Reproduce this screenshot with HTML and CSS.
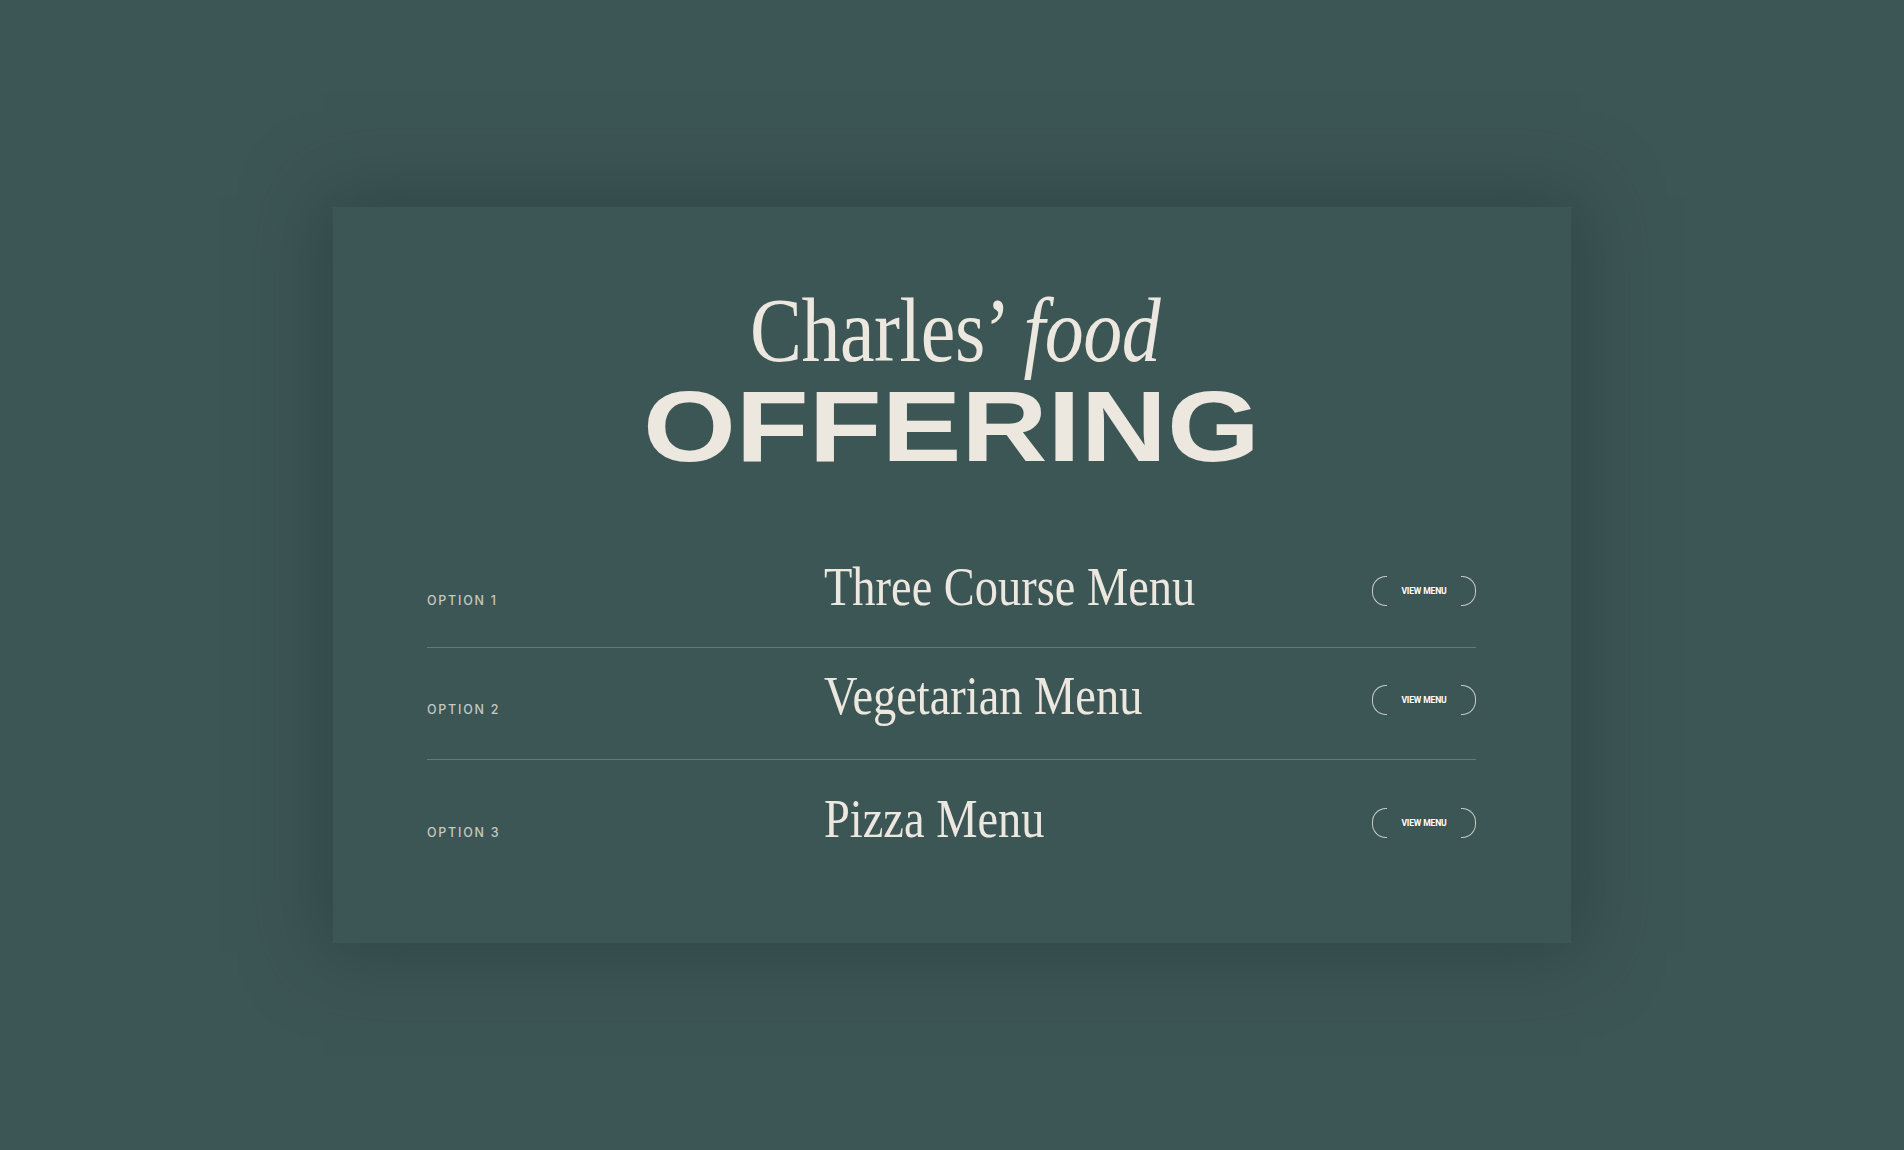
FILE: index.html
```html
<!DOCTYPE html>
<html lang="en">
<head>
<meta charset="utf-8">
<title>Charles' food offering</title>
<link rel="stylesheet" href="styles.css">
</head>
<body>
  <main class="card">
    <header class="heading">
      <div class="heading-script"><span class="heading-script-inner">Charles’ <em>food</em></span></div>
      <div class="heading-bold"><span class="heading-bold-inner">OFFERING</span></div>
    </header>
    <ul class="menu-list">
      <li class="menu-row">
        <span class="menu-label">OPTION 1</span>
        <span class="menu-name"><span class="menu-name-inner">Three Course Menu</span></span>
        <a class="menu-button" href="#">VIEW MENU</a>
      </li>
      <li class="menu-row">
        <span class="menu-label">OPTION 2</span>
        <span class="menu-name"><span class="menu-name-inner">Vegetarian Menu</span></span>
        <a class="menu-button" href="#">VIEW MENU</a>
      </li>
      <li class="menu-row">
        <span class="menu-label">OPTION 3</span>
        <span class="menu-name"><span class="menu-name-inner">Pizza Menu</span></span>
        <a class="menu-button" href="#">VIEW MENU</a>
      </li>
    </ul>
  </main>
</body>
</html>
```
FILE: styles.css
```css
* { box-sizing: border-box; }

html, body {
  margin: 0;
  padding: 0;
}

body {
  height: 100vh;
  background: #3c5655;
  display: flex;
  align-items: center;
  justify-content: center;
  font-family: "Liberation Serif", serif;
  color: #ece7df;
}

.card {
  width: 1238px;
  background: #3c5655;
  padding: 79px 95px 97px 94px;
  box-shadow: 0 0 70px 10px rgba(36, 56, 55, 0.55);
}

.heading {
  text-align: center;
}

.heading-script {
  font-family: "Liberation Serif", serif;
  font-size: 90px;
  line-height: 90px;
  height: 90px;
  padding-left: 8px;
  white-space: nowrap;
}

.heading-script-inner {
  display: inline-block;
  transform: scaleX(0.865);
  transform-origin: center;
  letter-spacing: -0.5px;
}

.heading-script em {
  font-style: italic;
}

.heading-bold {
  font-family: "Liberation Sans", sans-serif;
  font-weight: 700;
  font-size: 100px;
  line-height: 100px;
  height: 100px;
  white-space: nowrap;
}

.heading-bold-inner {
  display: inline-block;
  transform: scaleX(1.194);
  transform-origin: center;
}

.menu-list {
  list-style: none;
  margin: 83px 0 0;
  padding: 0;
}

.menu-row {
  display: grid;
  grid-template-columns: 397px 1fr auto;
  align-items: baseline;
  padding: 20px 0 33px;
  border-bottom: 1px solid #647a78;
}

.menu-row:first-child {
  padding-top: 0;
}

.menu-row:nth-child(2) {
  padding-bottom: 36px;
}

.menu-row:last-child {
  padding-top: 31px;
  padding-bottom: 0;
  border-bottom: none;
}

.menu-label {
  font-family: "Inter", "Liberation Sans", sans-serif;
  font-weight: 500;
  font-size: 12.5px;
  letter-spacing: 0.14em;
  color: #c4c9c2;
}

.menu-name {
  font-family: "Liberation Serif", serif;
  font-size: 55px;
  line-height: 55px;
  white-space: nowrap;
}

.menu-name-inner {
  display: inline-block;
  transform: scaleX(0.844);
  transform-origin: left center;
}

.menu-button {
  align-self: end;
  margin-bottom: 9px;
  display: flex;
  align-items: center;
  justify-content: space-between;
  width: 104px;
  height: 28px;
  font-family: "Roboto", "Liberation Sans", sans-serif;
  font-weight: 700;
  font-size: 8.6px;
  letter-spacing: -0.02em;
  color: #ffffff;
  text-decoration: none;
}

.menu-button::before,
.menu-button::after {
  content: "";
  width: 14px;
  height: 28px;
  border: 1px solid #c9ccc6;
}

.menu-button::before {
  border-right: none;
  border-radius: 14px 0 0 14px;
}

.menu-button::after {
  border-left: none;
  border-radius: 0 14px 14px 0;
}
```
